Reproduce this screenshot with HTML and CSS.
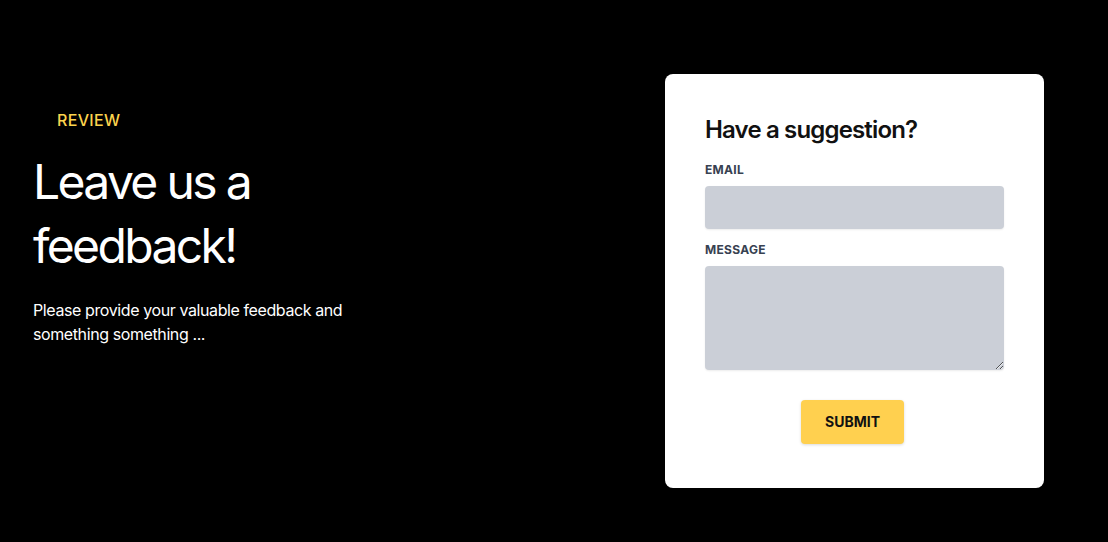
FILE: index.html
```html
<!DOCTYPE html>
<html lang="en">
<head>
<meta charset="utf-8">
<title>Feedback</title>
<link rel="stylesheet" href="styles.css">
</head>
<body>
<main class="page">
  <section class="intro">
    <p class="eyebrow">REVIEW</p>
    <h1 class="title">Leave us a feedback!</h1>
    <p class="lead">Please provide your valuable feedback and something something ...</p>
  </section>
  <form class="card">
    <h2 class="card-title">Have a suggestion?</h2>
    <label class="field-label" for="email">EMAIL</label>
    <input class="field" id="email" type="email">
    <label class="field-label field-label--spaced" for="message">MESSAGE</label>
    <textarea class="field field--area" id="message"></textarea>
    <div class="actions">
      <button class="submit" type="button">SUBMIT</button>
    </div>
  </form>
</main>
</body>
</html>
```
FILE: styles.css
```css
* { box-sizing: border-box; }

html, body {
  margin: 0;
  background: #000;
  font-family: Inter, "Liberation Sans", sans-serif;
}

.page {
  display: flex;
  justify-content: space-between;
  align-items: flex-start;
  padding: 74px 64px 54px 33px;
  min-height: 542px;
}

.intro {
  padding-top: 34px;
  width: 360px;
  color: #fff;
}

.eyebrow {
  margin: 0 0 18px;
  padding-left: 24px;
  color: #fcd34d;
  font-size: 16px;
  line-height: 24px;
  font-weight: 500;
  letter-spacing: 0.02em;
}

.title {
  margin: 0 0 20px;
  font-size: 48px;
  line-height: 64px;
  font-weight: 400;
  letter-spacing: -0.055em;
  width: 260px;
}

.lead {
  margin: 0;
  font-size: 16px;
  line-height: 24px;
  letter-spacing: -0.025em;
}

.card {
  width: 379px;
  background: #fff;
  border-radius: 8px;
  padding: 40px 40px 44px;
  display: flex;
  flex-direction: column;
}

.card-title {
  margin: 0 0 16px;
  font-size: 24px;
  line-height: 32px;
  font-weight: 600;
  letter-spacing: -0.035em;
  color: #111;
}

.field-label {
  display: block;
  margin-bottom: 8px;
  font-size: 12px;
  line-height: 16px;
  font-weight: 700;
  letter-spacing: 0.025em;
  color: #374151;
}

.field-label--spaced { margin-top: 13px; }

.field {
  display: block;
  width: 100%;
  height: 43px;
  border: none;
  border-radius: 4px;
  background: #cbcfd7;
  box-shadow: 0 1px 2px rgba(0, 0, 0, 0.08);
  font: inherit;
  padding: 10px 12px;
}

.field--area {
  height: 104px;
  resize: vertical;
}

.actions {
  display: flex;
  justify-content: center;
  margin-top: 30px;
  padding-right: 4px;
}

.submit {
  border: none;
  border-radius: 4px;
  background: #ffd04f;
  box-shadow: 0 1px 3px rgba(0, 0, 0, 0.15);
  padding: 12px 24px;
  font-family: Inter, "Liberation Sans", sans-serif;
  font-size: 14px;
  line-height: 20px;
  font-weight: 700;
  color: #111;
  cursor: pointer;
}
```
